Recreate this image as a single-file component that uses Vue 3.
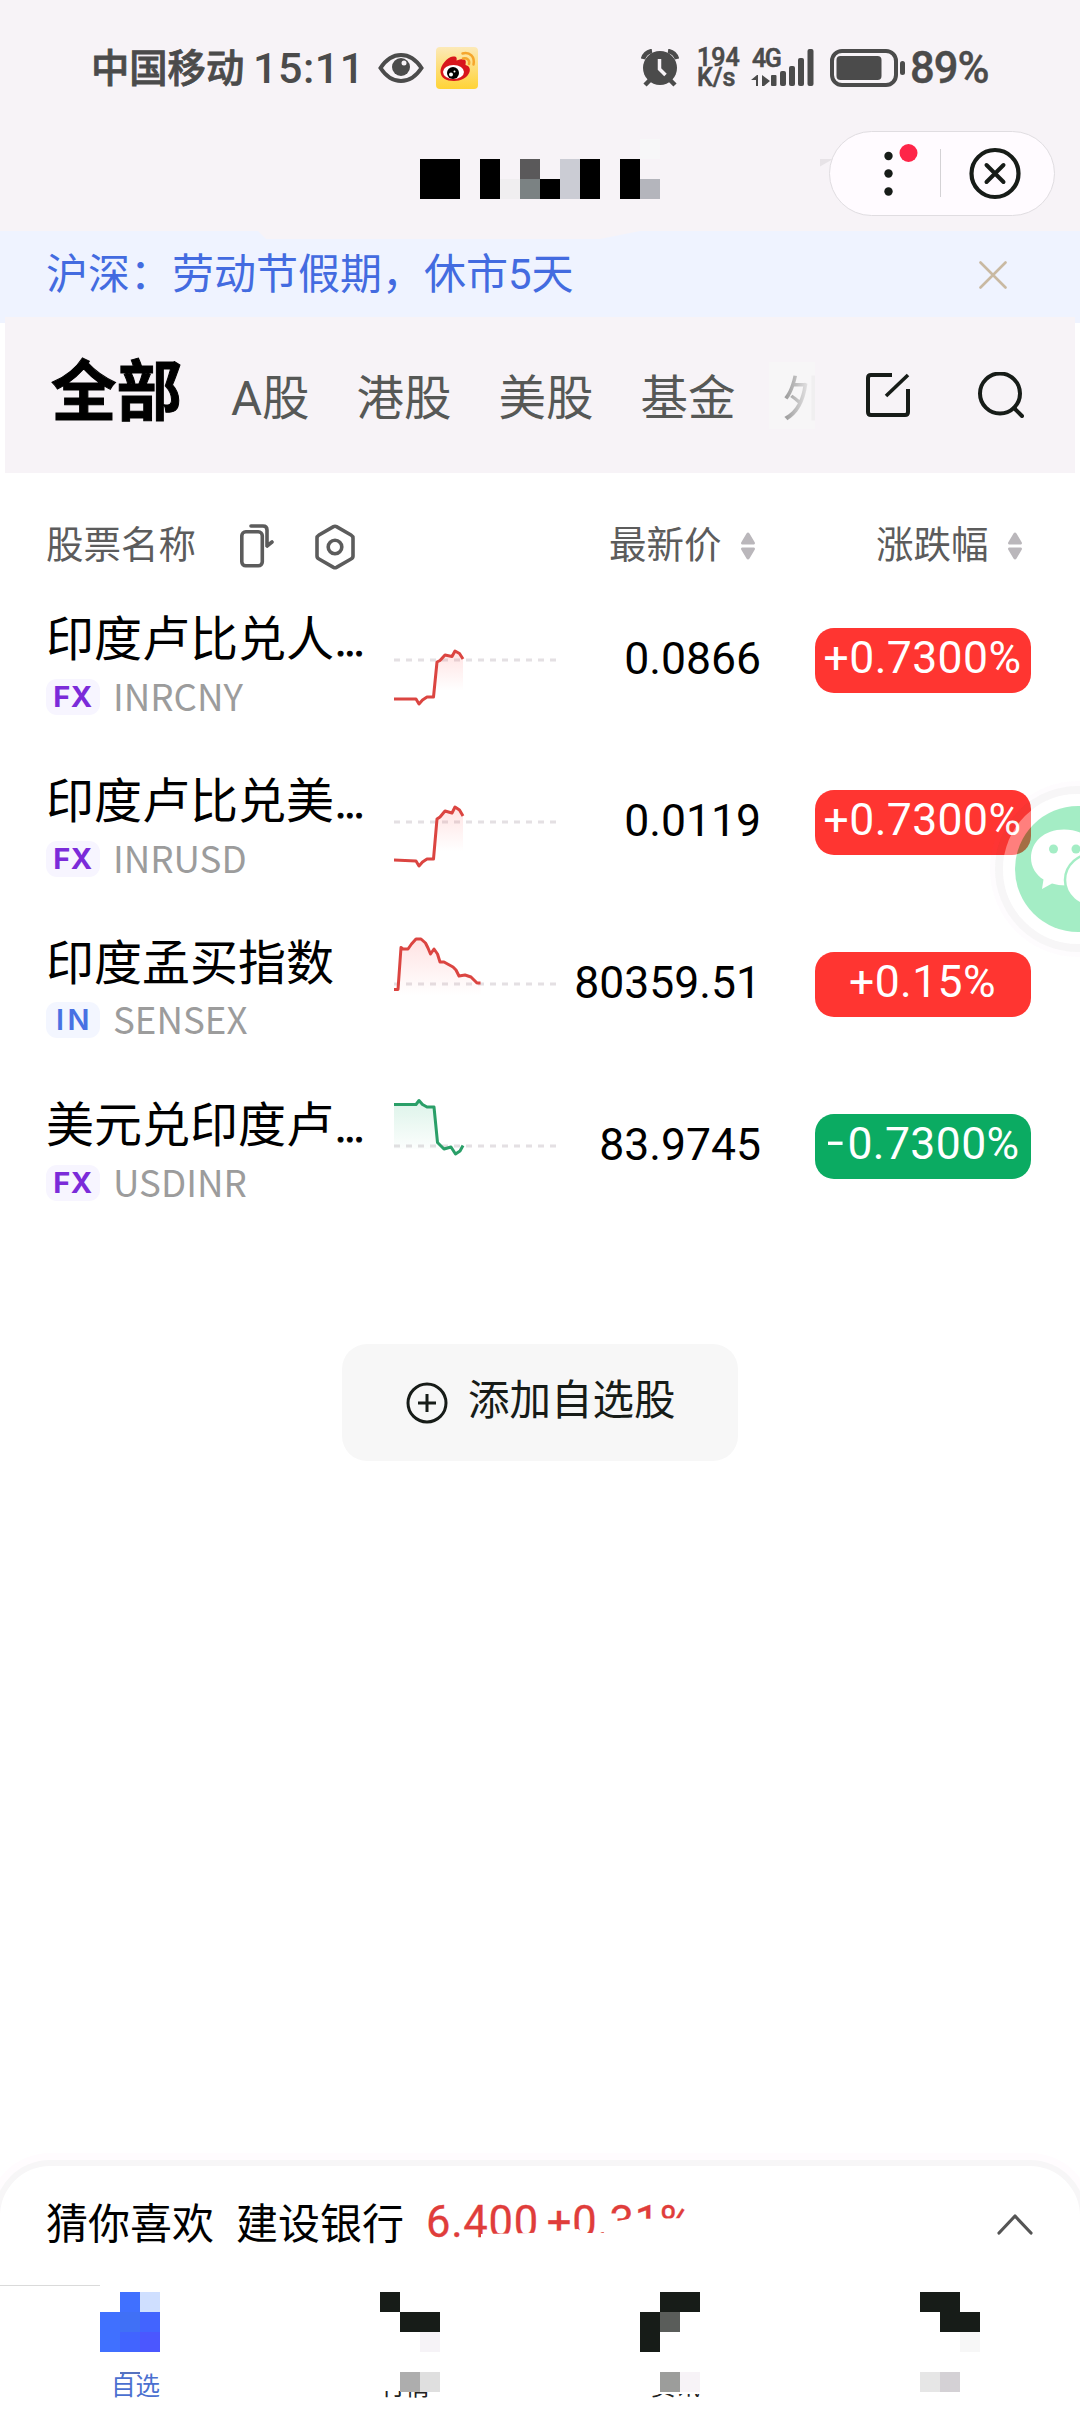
<script setup>
const tabs = ['A股', '港股', '美股', '基金']

const fxTail = '22,39 25,44 28.5,40 33,37 39.5,37'
const stocks = [
  {
    name: '印度卢比兑人', cut: true, tag: 'FX', code: 'INRCNY', price: '0.0866', change: '+0.7300%', dir: 'up',
    line: `0,39 ${fxTail} 43,2 46,0.5 51,-5 58,-3.5 61,-9 65.5,-6.5 69,-1`, end: 69, base: 39
  },
  {
    name: '印度卢比兑美', cut: true, tag: 'FX', code: 'INRUSD', price: '0.0119', change: '+0.7300%', dir: 'up',
    line: `0,38 ${fxTail} 43,-3 46,-5 51,-11 58,-9 61,-15 65.5,-12 69,-6`, end: 69, base: 38
  },
  {
    name: '印度孟买指数', cut: false, tag: 'IN', code: 'SENSEX', price: '80359.51', change: '+0.15%', dir: 'up',
    line: '0,5.5 4,5.5 7,-36.5 9,-35 14,-35 17.5,-40 22,-45 27,-45 31.5,-41 34,-36 36.5,-30 40,-35 43.5,-30 46,-22 50,-22 59,-17 62,-14 65,-8 71,-9 77,-7 83,-1 86.5,-1',
    end: 86.5, base: 12
  },
  {
    name: '美元兑印度卢', cut: true, tag: 'FX', code: 'USDINR', price: '83.9745', change: '-0.7300%', dir: 'down',
    line: '0,-41.5 22,-41.5 25,-45.5 28.5,-41.5 33,-39 40,-39 43.5,-3.5 50,3 57,1 61.5,8 66,5 69,-0.5', end: 69, base: 3
  }
]

const clearCell = 'transparent'
const titleCells = [
  [0, 0, 0, 0, 0, 0, 0, 0, 0, 0, 0, '#f7f7f8'],
  ['#000', '#000', 0, '#000', 0, '#5a595a', 0, '#cbccd4', '#000', 0, '#000', 0],
  ['#000', '#000', 0, '#000', '#f0eef0', '#7b8283', '#000', '#cbccd4', '#000', 0, '#000', '#b4b5bc']
].flat()

const ink = '#171c18'
const nav = [
  { left: 100, label: '自选', shift: 11, cls: 'active', cells: [0, '#4070ff', '#cfdfff', '#4070ff', '#4070f6', '#4264ff', '#4070ff', '#4164ff', '#4b57ff'], low: [0, 'linear-gradient(#5572c0 2px, transparent 2px)', 0] },
  { left: 110, label: '行情', shift: 1, cls: 'tail', cells: [ink, 0, 0, 0, ink, ink, 0, 0, '#f6f3f7'], low: [0, '#adadad', '#dfdfdf'] },
  { left: 100, label: '资讯', shift: 11, cls: 'tail low', cells: [0, ink, ink, ink, '#5a5d5a', 0, ink, 0, 0], low: [0, '#9c9d9b', '#f7f3f7'] },
  { left: 110, label: '', shift: 0, cls: '', cells: [ink, ink, 0, 0, ink, ink, 0, 0, '#f7f7f7'], low: ['#e6e6e6', '#d4d1d5', 0] }
]
</script>

<template>
  <div class="page">
    <header class="status">
      <span class="carrier">中国移动</span>
      <span class="clock">15:11</span>
      <svg class="eye" width="46" height="32" viewBox="0 0 46 32">
        <path d="M2.5 16Q11 3 23 3T43.500 16Q35 29 23 29T2.500 16Z" fill="none" stroke="#4b4b4b" stroke-width="4" />
        <circle cx="23" cy="15" r="9" fill="#4b4b4b" /><circle cx="26" cy="11" r="2.500" fill="#f7f3f7" />
      </svg>
      <svg class="weibo" width="42" height="42" viewBox="0 0 42 42">
        <defs><linearGradient id="wb" x1="0" y1="0" x2="0" y2="1"><stop offset="0" stop-color="#fce9b8" /><stop offset="1" stop-color="#ffd336" /></linearGradient></defs>
        <rect width="42" height="42" rx="4" fill="url(#wb)" />
        <path d="M4.500 25C4 19 11 10 17 9.500c4-.3 4 2 3.500 4 4-1.500 8-2 9 0 .7 1.500 0 3 0 4.500 4 1 5 4 4 7-2 6-9 9-15.500 9C10 34 5 31 4.500 25Z" fill="#d8161c" />
        <ellipse cx="17.500" cy="25" rx="10.500" ry="7" fill="#fff" /><circle cx="17" cy="26" r="6" fill="#000" />
        <circle cx="15" cy="27.500" r="2" fill="#fff" /><circle cx="18.500" cy="24.500" r="1" fill="#fff" />
        <path d="M26.500 6.500C34 4.500 39 10 37.500 17.500M27 11.500C31 10.500 34 13 33 17" fill="none" stroke="#f5a62d" stroke-width="2.500" stroke-linecap="round" />
      </svg>
      <svg class="alarm" width="38" height="38" viewBox="0 0 38 38">
        <g fill="none" stroke="#4b4b4b"><path d="M2 10Q4 3 11 2M36 10Q34 3 27 2" stroke-width="4.500" /><path d="M9 31l-5 5M29 31l5 5" stroke-width="4.500" /></g>
        <circle cx="19" cy="19" r="17" fill="#4b4b4b" /><path d="M18.500 10v10l6 6" fill="none" stroke="#f7f3f7" stroke-width="3.500" />
      </svg>
      <span class="speed"><b>194</b><b>K/s</b></span>
      <span class="signal">
        <b>4G</b>
        <svg width="64" height="38" viewBox="0 0 64 38" fill="#4b4b4b">
          <path d="M0 31l6-5h1v11H5v-6zM11 26l8 6-6 5h-2z" />
          <rect x="20" y="26" width="5.500" height="11" rx="1" /><rect x="29" y="22" width="6" height="15" rx="2" /><rect x="38" y="17" width="6" height="20" rx="2" /><rect x="47" y="9" width="6" height="28" rx="2" /><rect x="56.500" y="0" width="6" height="37" rx="2" />
        </svg>
      </span>
      <svg class="battery" width="76" height="38" viewBox="0 0 76 38">
        <rect x="2" y="2" width="64" height="34" rx="10" fill="none" stroke="#4b4b4b" stroke-width="4" />
        <rect x="6.500" y="7" width="45" height="24" rx="4" fill="#4b4b4b" /><rect x="70" y="12" width="5" height="14" rx="2.500" fill="#4b4b4b" />
      </svg>
      <span class="percent">89%</span>
    </header>

    <div class="titlebar">
      <div class="mosaic title"><i v-for="(c, i) in titleCells" :key="i" :style="{ background: c || clearCell }"></i></div>
      <span class="smudge"></span>
      <div class="capsule">
        <svg width="223" height="83" viewBox="0 0 223 83">
          <g fill="#171c18"><circle cx="58.500" cy="24" r="4.200" /><circle cx="58.500" cy="41.500" r="4.200" /><circle cx="58.500" cy="59.500" r="4.200" /></g>
          <circle cx="78.500" cy="21" r="9" fill="#fe2548" /><path d="M110.500 17v48" stroke="#d4d2d5" />
          <circle cx="165" cy="41.500" r="23.500" fill="none" stroke="#171c18" stroke-width="4.200" />
          <path d="M156.500 33l17 17m0-17l-17 17" stroke="#171c18" stroke-width="4" stroke-linecap="round" />
        </svg>
      </div>
    </div>

    <div class="notice">
      <span>沪深：劳动节假期，休市5天</span>
      <svg width="28" height="28" viewBox="0 0 28 28"><path d="M1.500 1.500l25 25m0-25l-25 25" stroke="#c9b9a2" stroke-width="2.600" stroke-linecap="round" /></svg>
    </div>

    <div class="tabs-wrap">
      <nav class="tabs">
        <strong>全部</strong>
        <span v-for="t in tabs" :key="t">{{ t }}</span>
        <span class="fading">外</span>
        <svg class="edit" width="46" height="46" viewBox="0 0 46 46" fill="none" stroke="#171c18" stroke-width="4">
          <path d="M27 3H6Q3 3 3 6V40Q3 43 6 43H40Q43 43 43 40V17" /><path d="M21 24L43 3" stroke-width="3.600" />
        </svg>
        <svg class="search" width="46" height="46" viewBox="0 0 46 46" fill="none" stroke="#171c18" stroke-width="4">
          <circle cx="22" cy="21.500" r="20" /><path d="M36 36l8 8" stroke-linecap="round" />
        </svg>
      </nav>
    </div>

    <div class="head">
      <span class="h-name">股票名称</span>
      <svg class="h-flip" width="34" height="44" viewBox="0 0 34 44" fill="none" stroke="#5c5c5c" stroke-width="3.600">
        <rect x="1.800" y="7.800" width="20.500" height="34" rx="4" /><path d="M11 2H23Q27 2 27 6V21M27 22l5-4" stroke-linecap="round" stroke-linejoin="round" stroke-width="3.600" />
      </svg>
      <svg class="h-hex" width="40" height="46" viewBox="0 0 40 46" fill="none" stroke="#5c5c5c" stroke-width="3.600">
        <path d="M18.500 2.600Q20 1.800 21.500 2.600L36 11Q38 12.200 38 14V32Q38 34 36 35L21.500 43.400Q20 44.200 18.500 43.400L4 35Q2 34 2 32V14Q2 12.200 4 11Z" /><circle cx="20" cy="23" r="6.800" />
      </svg>
      <span class="h-price">最新价</span>
      <svg class="sorter" width="14" height="28" viewBox="0 0 14 28" fill="#bab7bb"><path d="M1 12.500Q-.5 12 .3 10.200L5.500 1.500Q7-.5 8.500 1.500L13.700 10.200Q14.500 12 13 12.500ZM1 15.500Q-.5 16 .3 17.800L5.500 26.500Q7 28.500 8.500 26.500L13.700 17.800Q14.500 16 13 15.500Z" /></svg>
      <span class="h-change">涨跌幅</span>
      <svg class="sorter" width="14" height="28" viewBox="0 0 14 28" fill="#bab7bb"><path d="M1 12.500Q-.5 12 .3 10.200L5.500 1.500Q7-.5 8.500 1.500L13.700 10.200Q14.500 12 13 12.500ZM1 15.500Q-.5 16 .3 17.800L5.500 26.500Q7 28.500 8.500 26.500L13.700 17.800Q14.500 16 13 15.500Z" /></svg>
    </div>

    <main class="list">
      <div v-for="s in stocks" :key="s.code" class="row">
        <div class="ident">
          <div class="name">{{ s.name }}<span v-if="s.cut" class="dots">...</span></div>
          <div class="sub"><span class="tag" :class="s.tag">{{ s.tag }}</span><span class="code">{{ s.code }}</span></div>
        </div>
        <svg class="spark" :class="s.dir" width="163" height="120" viewBox="0 -60 163 120">
          <defs><linearGradient :id="s.code" x1="0" y1="0" x2="0" y2="1"><stop offset="0" :stop-color="s.dir === 'up' ? '#ff3333' : '#0aab63'" stop-opacity=".14" /><stop :offset="s.base > 20 ? .75 : 1" :stop-color="s.dir === 'up' ? '#ff3333' : '#0aab63'" stop-opacity="0" /></linearGradient></defs>
          <path d="M0 0H163" stroke="#e4e0e3" stroke-width="3" stroke-dasharray="6 6" />
          <polygon :points="`0,${s.base} ${s.line} ${s.end},${s.base}`" :fill="`url(#${s.code})`" />
          <polyline :points="s.line" fill="none" stroke="currentColor" stroke-width="3" stroke-linejoin="round" />
        </svg>
        <span class="price">{{ s.price }}</span>
        <span class="pill" :class="s.dir"><i v-if="s.dir === 'down'" class="minus">−</i>{{ s.change.replace('-', '') }}</span>
      </div>
    </main>

    <button class="add">
      <svg width="42" height="42" viewBox="0 0 42 42" fill="none" stroke="#171c18" stroke-width="3"><circle cx="21" cy="21" r="19" /><path d="M12 21h18M21 12v18" /></svg>
      <span>添加自选股</span>
    </button>

    <footer class="bottom">
      <div class="guess">
        <span>猜你喜欢</span><span class="bank">建设银行</span>
        <span class="quote"><span>6.400</span><span>+0.31%</span></span>
        <svg width="38" height="22" viewBox="0 0 38 22"><path d="M3 20L19 3l16 17" fill="none" stroke="#555" stroke-width="3.200" stroke-linecap="round" stroke-linejoin="round" /></svg>
      </div>
      <div class="navbar">
        <div v-for="(n, k) in nav" :key="k" class="item" :style="{ paddingLeft: n.left + 'px' }">
          <div class="mosaic cell3"><i v-for="(c, i) in n.cells" :key="i" :style="{ background: c || clearCell }"></i></div>
          <div class="mosaic cell3 lower"><i v-for="(c, i) in n.low" :key="i" :style="{ background: c || clearCell }"></i></div>
          <span class="nav-label" :class="n.cls" :style="{ marginLeft: n.shift + 'px' }">{{ n.label }}</span>
        </div>
      </div>
    </footer>

    <svg class="wechat" width="90" height="180" viewBox="0 0 90 180">
      <circle cx="88" cy="89" r="79" fill="none" stroke="#655565" stroke-width="8" stroke-opacity=".05" />
      <circle cx="88" cy="89" r="85.500" fill="none" stroke="#c060c0" stroke-width="5" stroke-opacity=".02" />
      <g opacity=".37">
        <circle cx="88" cy="89" r="75" fill="#fff" /><circle cx="88" cy="89" r="63" fill="#0cd165" />
        <path d="M74 49.500C54 49.500 41 62 41 78c0 9 5 17 12.500 21.500L52 109l10-5.500q6 2 14 2l32-28C106 60 93 49.500 74 49.500Z" fill="#fff" />
        <ellipse cx="105" cy="100" rx="30" ry="27" fill="#fff" stroke="#0cd165" stroke-width="2.500" />
        <circle cx="63.500" cy="69" r="4.500" fill="#0cd165" /><circle cx="86" cy="69" r="4.500" fill="#0cd165" />
      </g>
    </svg>
  </div>
</template>

<style>
body { margin: 0; background: #fff; }
</style>

<style scoped>
.page { position: relative; width: 1080px; height: 2412px; overflow: hidden; display: flex; flex-direction: column; background: #fff; font-family: Roboto, "Noto Sans CJK SC", sans-serif; line-height: 1.2; color: #000; }
.page * { box-sizing: border-box; }
.page svg { flex: none; display: block; }
.page i { font-style: normal; }

.status { height: 112px; flex: none; padding: 24px 0 0 91px; display: flex; align-items: center; background: #f7f3f7; color: #4b4b4b; font-weight: 500; white-space: nowrap; }
.carrier { font-size: 38.300px; width: 162px; padding-top: 2px; -webkit-text-stroke: .8px; }
.clock { font-size: 43px; width: 125px; padding-top: 1px; letter-spacing: .5px; }
.weibo { margin-left: 12px; }
.alarm { margin-left: 163px; }
.speed { margin-left: 18px; width: 54px; display: flex; flex-direction: column; font-size: 25px; line-height: 20px; }
.speed b, .signal b { font-weight: 500; -webkit-text-stroke: .6px; }
.signal { position: relative; height: 38px; }
.signal b { position: absolute; left: 1px; top: 0; font-size: 25px; line-height: 19px; letter-spacing: -1.5px; }
.battery { margin-left: 15px; }
.percent { margin-left: 4px; padding-top: 2px; font-size: 43.500px; letter-spacing: -1px; -webkit-text-stroke: .4px; }

.titlebar { height: 127px; flex: none; margin-bottom: -8px; padding: 4px 25px 8px 420px; display: flex; align-items: center; background: #f7f3f7; }
.mosaic { display: grid; grid-auto-rows: 20px; }
.title { grid-template-columns: repeat(12, 20px); margin-top: -10px; }
.smudge { width: 14px; height: 8px; margin: -22px -5px 0 auto; background: #e7e3e7; clip-path: polygon(0 0, 100% 0, 0 100%); }
.capsule { width: 226px; height: 85px; border: 1px solid #e0dde1; border-radius: 43px; background: #fffbff; }

.notice { position: relative; height: 86px; flex: none; padding: 0 73px 0 46px; display: flex; align-items: center; justify-content: space-between; background: #eff3ff; clip-path: polygon(0 0, 258px 0, 266px 8px, 600px 8px, 640px 0, 100% 0, 100% 100%, 0 100%); color: #436be0; font-size: 42px; }
.notice span { padding-top: 3px; }
.notice svg { margin-top: 2px; }

.tabs-wrap { flex: none; padding: 0 5px; background: linear-gradient(#eff3ff 6px, #fff 6px); }
.tabs { height: 156px; padding-left: 46px; display: flex; align-items: center; background: #f7f3f7; color: #565856; font-size: 47.5px; white-space: nowrap; }
.tabs strong { font-size: 65.500px; font-weight: 700; color: #000; margin-top: -4px; width: 133px; -webkit-text-stroke: 1px; }
.tabs span { margin-left: 47px; padding-top: 9px; }
.tabs .fading { width: 46px; height: 67px; margin: 0 0 0 33px; padding: 5px 0 0 14px; line-height: 67px; overflow: hidden; color: transparent; background: linear-gradient(90deg, #8f8f8f 12px, #f0eff0 43px) text, #f7f6f7; -webkit-background-clip: text, border-box; }
.edit { margin-left: 50px; }
.search { margin-left: 67px; }

.head { height: 106px; flex: none; padding: 38px 0 0 46px; display: flex; align-items: center; color: #5c5c5c; font-size: 37.5px; white-space: nowrap; }
.h-name { width: 194px; }
.h-flip { margin-top: 2px; }
.h-hex { margin: 4px 0 0 41px; }
.h-price { margin-left: 254px; width: 112px; }
.sorter { margin-left: 20px; margin-top: 1px; }
.h-change { margin-left: 121px; width: 112px; }

.list { flex: none; }
.row { height: 162px; padding-left: 46px; display: flex; align-items: center; }
.ident { width: 348px; height: 162px; padding-top: 24px; }
.name { font-size: 48px; line-height: 74px; white-space: nowrap; }
.dots { font-size: 44px; letter-spacing: -2.400px; margin-left: 1px; -webkit-text-stroke: 1px; }
.sub { display: flex; align-items: center; margin-top: 1px; }
.tag { width: 54px; height: 36px; border-radius: 11px; background: #f7f5ff; display: flex; align-items: center; justify-content: center; font: 700 29px/36px Inter, sans-serif; letter-spacing: .5px; color: #7b2bd9; }
.tag.IN { color: #4871e3; background: #f3f6ff; letter-spacing: 3.500px; padding-left: 3px; font-weight: 600; }
.code { margin-left: 13px; font: 36.700px/36px "Noto Sans CJK SC", sans-serif; color: #9c9c9c; margin-top: -5px; }
.spark.up { color: #db4541; }
.spark.down { color: #2a9f68; }
.price { width: 206px; text-align: right; font-size: 44.500px; line-height: 60px; margin: -3px 0 0 -2px; }
.pill { margin-left: 54px; width: 216px; height: 65px; border-radius: 19px; display: flex; align-items: center; justify-content: center; padding: 0 1px 3px 0; color: #fff; font-size: 44.500px; letter-spacing: .4px; white-space: nowrap; }
.pill.up { background: #ff3531; }
.pill.down { background: #0bab62; }
.minus { display: inline-block; width: 22px; transform: scaleX(.8); transform-origin: left; }

.add { align-self: center; margin: 117px 0 0; width: 396px; height: 117px; flex: none; border: 0; border-radius: 25px; background: #f7f7f7; display: flex; align-items: center; padding: 0 0 0 64px; font: 41.500px/60px Roboto, "Noto Sans CJK SC", sans-serif; color: #171c18; }
.add span { margin: -4px 0 0 20px; }

.bottom { margin-top: auto; flex: none; }
.guess { height: 119px; padding: 0 46px 1px 46px; display: flex; align-items: center; font-size: 42px; white-space: nowrap; border-radius: 50px 50px 0 0; background: #fff; box-shadow: 0 0 0 6px #f7f6f7, 0 0 0 13px #fffcfe; }
.guess svg { margin-top: -2px; }
.bank { margin-left: 22px; }
.quote { margin: -4px auto 0 22px; color: #e03d3b; font-size: 43.500px; letter-spacing: .7px; line-height: 50px; height: 50px; -webkit-text-stroke: .3px; clip-path: polygon(0 0, 100% 0, 100% 20px, 202px 21px, 180px 25px, 178px 35px, 158px 35px, 152px 31px, 105px 35px, 55px 36px, 55px 50px, 0 50px); }
.quote span + span { margin-left: 8px; }
.navbar { position: relative; height: 127px; display: grid; grid-template-columns: repeat(4, 270px); background: linear-gradient(90deg, #dadada 100px, transparent 100px) 0 0 / 100% 1px no-repeat #fff; }
.item { position: relative; padding-top: 7px; }
.cell3 { grid-template-columns: repeat(3, 20px); }
.lower { margin-top: 20px; position: relative; z-index: 1; }
.nav-label { display: block; height: 26px; margin-top: -18px; font-size: 24.500px; line-height: 26px; color: #222; }
.active { color: #4b70d0; }
.tail { clip-path: inset(17px 0 0 0); }
.tail.low { clip-path: inset(20px 0 0 0); }

.wechat { position: absolute; right: 0; top: 780px; }
</style>
